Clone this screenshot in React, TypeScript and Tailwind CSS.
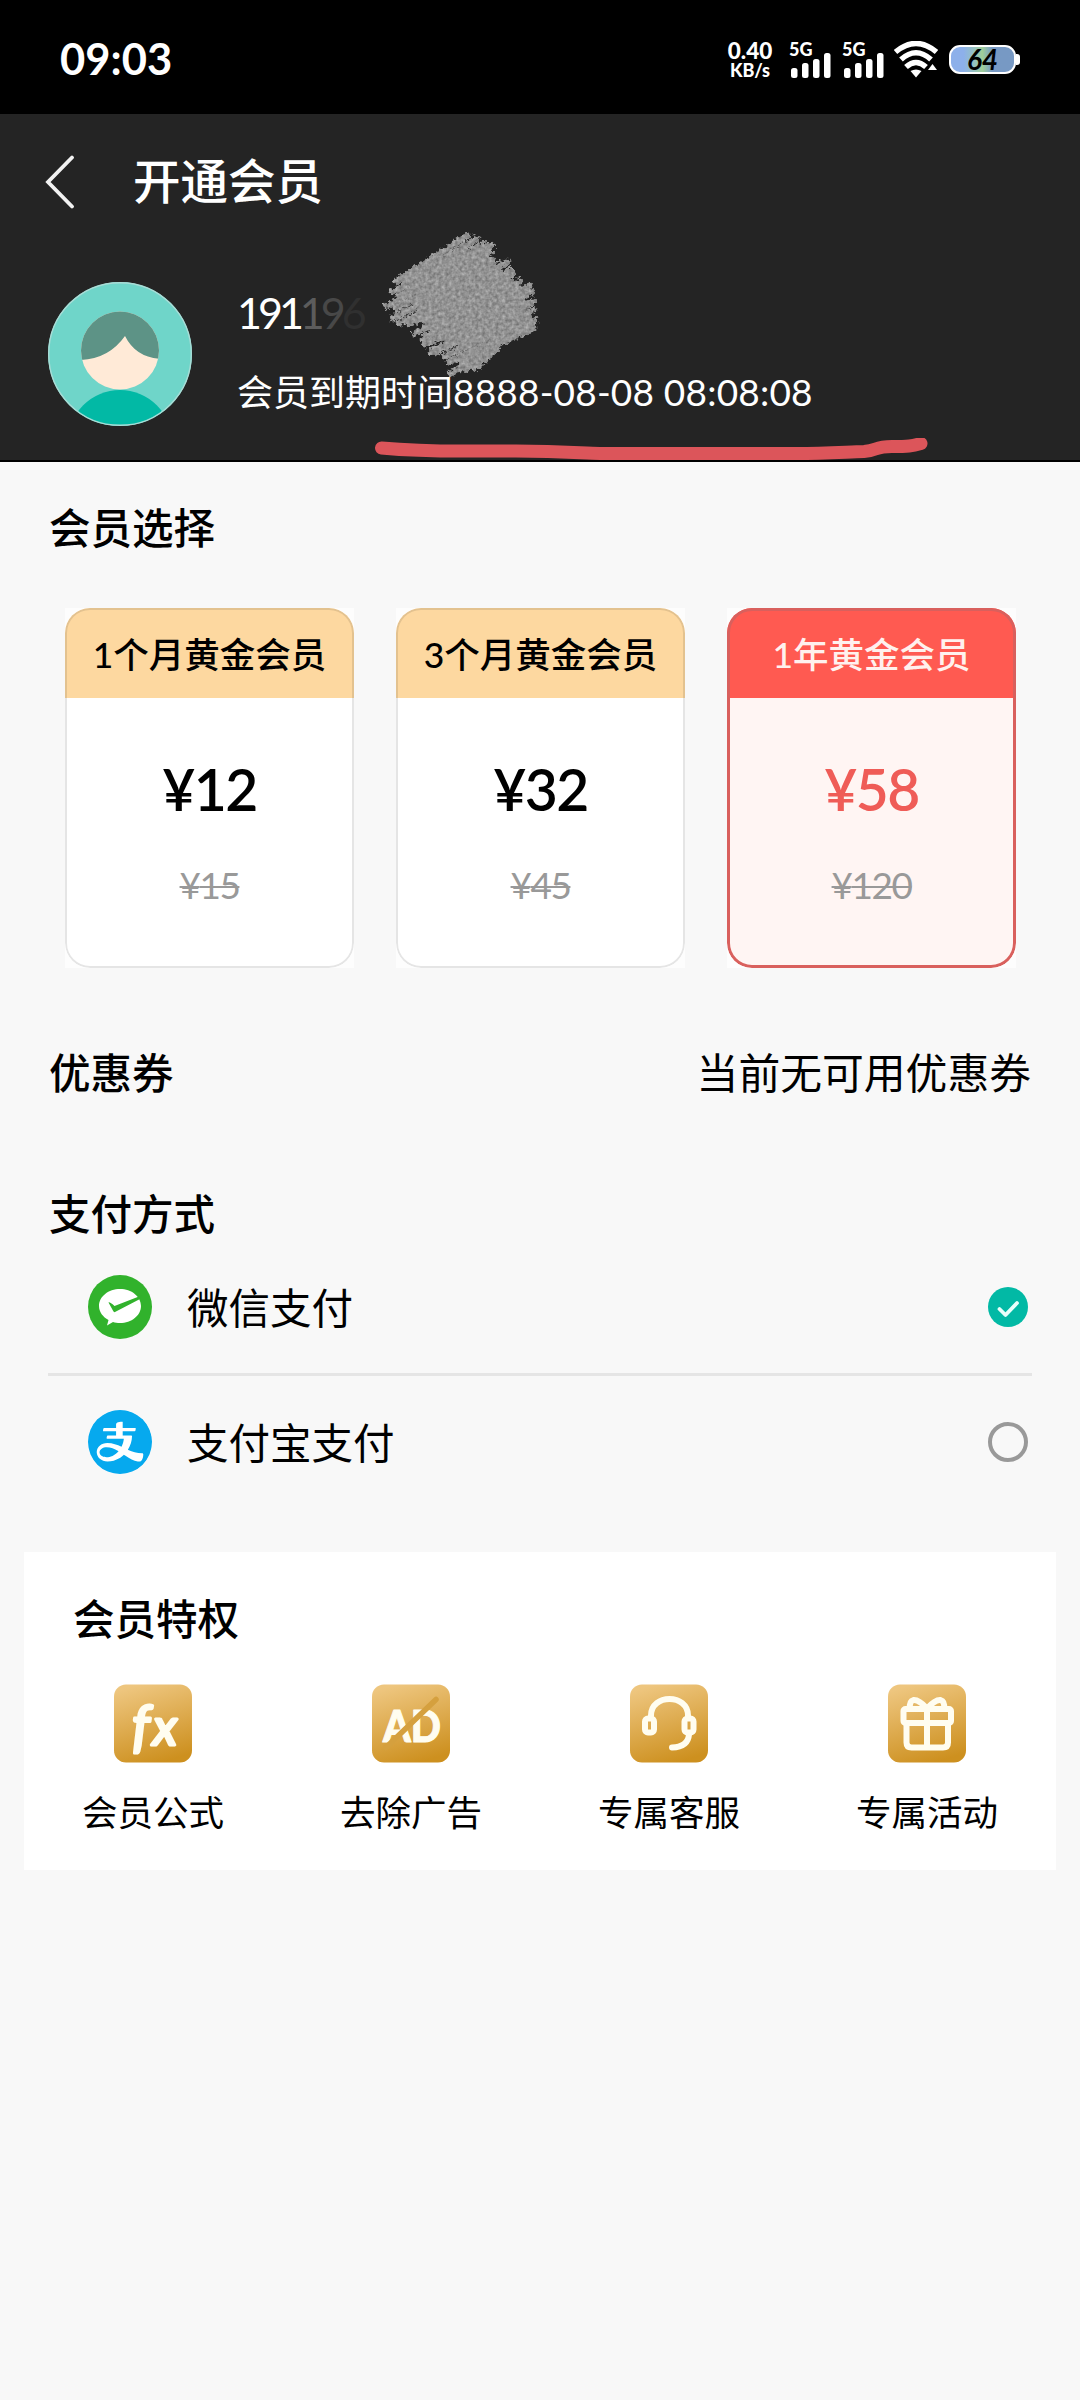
import { useState } from 'react'
import type { ReactNode } from 'react'
import { AiFillAlipayCircle } from 'react-icons/ai'

type Plan = { id: string; name: string; price: number; original: number }

const PLANS: Plan[] = [
  { id: 'month', name: '1个月黄金会员', price: 12, original: 15 },
  { id: 'quarter', name: '3个月黄金会员', price: 32, original: 45 },
  { id: 'year', name: '1年黄金会员', price: 58, original: 120 },
]

// [x1, y1, x2, y2] of each pencil stroke
const STROKES = [
  [18, 55, 88, 10], [26, 56, 97, 13], [14, 66, 104, 18], [20, 70, 113, 19],
  [8, 80, 112, 26], [18, 82, 114, 34], [14, 92, 128, 36], [20, 97, 132, 44],
  [30, 98, 134, 48], [36, 107, 140, 56], [44, 112, 150, 60], [46, 118, 152, 66],
  [52, 126, 154, 76], [56, 126, 154, 84], [66, 130, 150, 92], [70, 136, 156, 95],
  [82, 134, 154, 102], [72, 147, 130, 111], [86, 144, 120, 117], [96, 142, 118, 122],
]

function Scribble() {
  return (
    <svg viewBox="0 0 170 160" className="absolute left-[379px] top-[112px] w-[170px] h-[160px]">
      <filter id="pencil" x="-10%" y="-10%" width="120%" height="120%" colorInterpolationFilters="sRGB">
        <feTurbulence type="fractalNoise" baseFrequency="0.3" numOctaves="2" seed="4" result="n" />
        <feDisplacementMap in="SourceGraphic" in2="n" scale="8" xChannelSelector="R" yChannelSelector="G" result="rough" />
        <feColorMatrix in="n" type="matrix" values="0.35 0 0 0 0.4  0.35 0 0 0 0.4  0.35 0 0 0 0.4  0 0 0 0 1" result="grain" />
        <feComposite in="grain" in2="rough" operator="in" />
      </filter>
      <g filter="url(#pencil)" stroke="#8c8c8c" strokeWidth="6.5" strokeLinecap="round">
        <path d="M46 46 84 20 108 30 126 46 142 62 148 80 134 98 92 122 66 118 44 100 34 78Z" fill="#8c8c8c" stroke="none" />
        {STROKES.map(([x1, y1, x2, y2], i) => <path key={i} d={`M${x1} ${y1}L${x2} ${y2}`} />)}
      </g>
    </svg>
  )
}

function Signal() {
  return (
    <div className="w-[42px] h-[36px] flex flex-col">
      <span className="text-[18px] leading-[14px] h-[11px] font-black">5G</span>
      <svg viewBox="0 0 42 25" className="w-[42px] h-[25px] fill-white">
        <rect x="2" y="15" width="6.5" height="10" rx="2.5" />
        <rect x="13" y="10" width="6.5" height="15" rx="2.5" />
        <rect x="24" y="6" width="6.5" height="19" rx="2.5" />
        <rect x="35" y="0" width="6.5" height="25" rx="2.5" />
      </svg>
    </div>
  )
}

function StatusBar() {
  return (
    <div className="h-[114px] bg-black text-white flex items-center justify-between px-[60px] pt-[5px]">
      <span className="text-[43.5px] leading-none font-bold pb-[1px]">09:03</span>
      <div className="flex items-center">
        <div className="flex flex-col items-center w-[50px] mr-[14px] font-black">
          <span className="text-[22.500px] leading-[21px]">0.40</span>
          <span className="text-[18px] leading-[19px]">KB/s</span>
        </div>
        <Signal />
        <div className="w-[11px]" />
        <Signal />
        <svg viewBox="0 0 44 37" className="w-[44px] h-[37px] ml-[10px] mr-[11px]">
          <g fill="none" stroke="#fff" strokeWidth="5.500">
            <path d="M1.500 11Q22-6 42.500 11" />
            <path d="M7 18.500Q22 5 37 18.500" />
            <path d="M12 26Q22 17 32 26" />
          </g>
          <path d="M16.500 30Q22 27 27.500 30L22 36.500Z" fill="#fff" />
          <path d="M34 29 38.500 23 43 29Z" fill="#fff" />
        </svg>
        <div className="flex items-center">
          <div className="w-[67px] h-[29px] rounded-[11px] border-2 border-white bg-linear-to-r from-[#8db0ea] from-20% via-[#9fce98] via-50% to-[#7799c4] to-65% text-black text-[28px] leading-[25px] font-bold italic text-center">
            64
          </div>
          <div className="w-[4px] h-[11px] bg-white rounded-r-[3px]" />
        </div>
      </div>
    </div>
  )
}

function Avatar() {
  return (
    <svg viewBox="0 0 144 144" className="w-[144px] h-[144px] shrink-0">
      <clipPath id="round"><circle cx="72" cy="72" r="72" /></clipPath>
      <clipPath id="head"><circle cx="72" cy="68.500" r="39" /></clipPath>
      <g clipPath="url(#round)">
        <rect width="144" height="144" fill="#6fd5c9" />
        <circle cx="72" cy="160" r="52" fill="#02b9a5" />
        <circle cx="72" cy="68.500" r="39" fill="#ffead7" />
        <path d="M30 26H114V77Q88 76 77 54Q60 78 30 78Z" fill="#5d9386" clipPath="url(#head)" />
      </g>
      <circle cx="72" cy="72" r="71.300" fill="none" stroke="#a9dcd6" strokeWidth="1.400" />
    </svg>
  )
}

function Header() {
  return (
    <div className="relative h-[348px] bg-[#242424] text-white border-b-2 border-black">
      <div className="h-[135px] flex items-center">
        <svg viewBox="0 0 30 54" className="w-[30px] h-[54px] ml-[45px] mr-[58px]">
          <path d="M27 2.500 3 27 27 51.500" fill="none" stroke="#f2f2f2" strokeWidth="3.800" strokeLinecap="round" />
        </svg>
        <h1 className="text-[47.500px] leading-[60px] font-medium pb-[1px]">开通会员</h1>
      </div>
      <div className="flex pl-[48px] pt-[33px]">
        <Avatar />
        <div className="ml-[45px]">
          <p className="text-[43px] leading-[62px] h-[60px] tracking-[-4px]">
            191<span className="text-[#5c5c5c]">1</span><span className="text-[#484848]">9</span><span className="text-[#303030]">6</span>
          </p>
          <p className="text-[36px] leading-[60px] mt-[20px] whitespace-nowrap">
            会员到期时间<span className="text-[37px] tracking-[0.200px]">8888-08-08 08:08:08</span>
          </p>
        </div>
      </div>
      <Scribble />
      {/* red marker under the expiry date */}
      <svg viewBox="0 0 570 30" className="absolute left-[366px] top-[324px] w-[570px] h-[30px]">
        <path d="M15.500 10C70 15 100 12.500 150 13S220 15.500 234 15.500H430C460 15.500 480 14 498 13.500 512 12.500 508 8.500 526 8.500 542 8.500 546 8 555 5.500"
          fill="none" stroke="#dc555a" strokeWidth="13" strokeLinecap="round" strokeLinejoin="round" />
      </svg>
    </div>
  )
}

function PlanCard({ plan, active, onClick }: { plan: Plan; active: boolean; onClick: () => void }) {
  return (
    <div className="w-[289px] h-[360px] bg-[#fdfdfd]" onClick={onClick}>
      <div className={`relative w-full h-full rounded-[25px] overflow-hidden text-center ${active ? 'bg-[#fff5f3]' : 'bg-white'}`}>
        <div className={`h-[90px] leading-[94px] text-[35.500px] font-medium whitespace-nowrap ${active ? 'bg-[#ff5a51] text-[#fff1ee]' : 'bg-[#fdd8a0] text-black'}`}>
          {plan.name}
        </div>
        <p className={`mt-[61px] text-[57px] leading-[60px] font-semibold tracking-[-1.500px] ${active ? 'text-[#ef5c57]' : 'text-black'}`}>¥{plan.price}</p>
        <p className="mt-[42px] text-[37px] leading-[48px] text-[#999] tracking-[-1.500px]">
          <span className="line-through decoration-[2px]">¥{plan.original}</span>
        </p>
        <div className={`absolute inset-0 rounded-[25px] ${active ? 'border-[3px] border-[#d9605d]' : 'border-2 border-black/10'}`} />
      </div>
    </div>
  )
}

function WechatPay() {
  return (
    <svg viewBox="0 0 64 64" className="w-[64px] h-[64px]">
      <circle cx="32" cy="32" r="32" fill="#31b22c" />
      <path d="M32 14C43.500 14 53 21.500 53 31S43.500 48 32 48C29.500 48 27 47.600 25 47L19 50.500 20.500 45C15 42 11 37 11 31 11 21.500 20.500 14 32 14Z" fill="#fff" />
      <path d="M20.500 27.500Q21.500 26.500 26.500 31L53.500 20.500 52 24 27 37Q25.800 37.500 25.200 36Z" fill="#31b22c" />
    </svg>
  )
}

function Alipay() {
  return (
    <div className="w-[64px] h-[64px] rounded-full bg-white overflow-hidden flex items-center justify-center">
      <AiFillAlipayCircle className="w-[74px] h-[74px] shrink-0 text-[#06a9ee]" />
    </div>
  )
}

function Radio({ checked }: { checked: boolean }) {
  if (!checked) return <div className="w-[40px] h-[40px] rounded-full border-4 border-[#999]" />
  return (
    <svg viewBox="0 0 40 40" className="w-[40px] h-[40px]">
      <circle cx="20" cy="20" r="20" fill="#02b9a5" />
      <path d="M11.500 22 17.500 28 29 16" fill="none" stroke="#e8fffb" strokeWidth="3.800" strokeLinecap="round" strokeLinejoin="round" />
    </svg>
  )
}

function Perk({ label, children }: { label: string; children: ReactNode }) {
  return (
    <div className="flex flex-col items-center">
      <svg viewBox="0 0 78 78" className="w-[78px] h-[79px]">
        <defs>
          <linearGradient id="gold" x1="0.300" y1="0" x2="0.600" y2="1">
            <stop offset="0" stopColor="#eec67f" />
            <stop offset="1" stopColor="#cd901f" />
          </linearGradient>
        </defs>
        <rect width="78" height="78" rx="12" fill="url(#gold)" />
        {children}
      </svg>
      <span className="mt-[26px] text-[35.500px] leading-[48px]">{label}</span>
    </div>
  )
}

export default function App() {
  const [plan, setPlan] = useState('year')
  const [pay, setPay] = useState('wechat')

  return (
    <div className="w-[1080px] h-[2400px] overflow-hidden bg-[#f8f8f8] text-black font-[Lato,'Noto_Sans_CJK_SC',sans-serif]">
      <StatusBar />
      <Header />

      <div className="px-[48px]">
        <h2 className="pt-[36px] pl-[1px] text-[41.500px] leading-[60px] font-medium">会员选择</h2>
        <div className="mt-[50px] flex gap-[42px] pl-[17px]">
          {PLANS.map(p => <PlanCard key={p.id} plan={p} active={plan === p.id} onClick={() => setPlan(p.id)} />)}
        </div>

        <div className="mt-[75px] flex justify-between pl-[1px] leading-[60px]">
          <span className="text-[41.500px] font-medium">优惠券</span>
          <span className="text-[41.800px] pr-[1px]">当前无可用优惠券</span>
        </div>

        <h2 className="mt-[81px] pl-[1px] text-[41.500px] leading-[60px] font-medium">支付方式</h2>
        <div className="h-[129px] pb-[3px] pl-[40px] pr-[4px] flex items-center" onClick={() => setPay('wechat')}>
          <WechatPay />
          <span className="ml-[35px] flex-1 pt-[2px] text-[41.500px]">微信支付</span>
          <Radio checked={pay === 'wechat'} />
        </div>
        <div className="h-[3px] bg-[#e5e5e5]" />
        <div className="h-[132px] pl-[40px] pr-[4px] flex items-center" onClick={() => setPay('alipay')}>
          <Alipay />
          <span className="ml-[35px] flex-1 pt-[2px] text-[41.500px]">支付宝支付</span>
          <Radio checked={pay === 'alipay'} />
        </div>
      </div>

      <div className="mx-[24px] mt-[44px] h-[318px] bg-white pt-[37px]">
        <h2 className="pl-[49px] text-[41.500px] leading-[60px] font-medium">会员特权</h2>
        <div className="mt-[35px] grid grid-cols-4">
          <Perk label="会员公式">
            <g fill="#fffdf0" stroke="#fffdf0" strokeWidth="2" strokeLinejoin="round" fontStyle="italic">
              <text x="18" y="60" fontSize="56" fontWeight="400" strokeWidth="3">f</text>
              <text x="39" y="60" fontSize="50" fontWeight="400" strokeWidth="3" textLength="24" lengthAdjust="spacingAndGlyphs">x</text>
            </g>
          </Perk>
          <Perk label="去除广告">
            <text x="11" y="57" fontSize="44" fontWeight="900" fill="#fffdf0" stroke="#fffdf0" strokeLinejoin="round" textLength="58" lengthAdjust="spacingAndGlyphs">AD</text>
            <path d="M14 63 64 15" stroke="#d5a03e" strokeWidth="5.500" strokeLinecap="round" />
          </Perk>
          <Perk label="专属客服">
            <g fill="none" stroke="#fffdf0" strokeWidth="6" strokeLinecap="round">
              <path d="M21 31C21 9 58 9 58 31" />
              <rect x="15" y="34" width="9" height="14" rx="3" />
              <rect x="54.500" y="34" width="9" height="14" rx="3" />
              <path d="M59 50Q58 62.500 42 63" />
            </g>
          </Perk>
          <Perk label="专属活动">
            <g fill="none" stroke="#fffdf0" strokeWidth="6" strokeLinejoin="round">
              <rect x="15.500" y="24.500" width="47.500" height="14" rx="2" />
              <path d="M18.500 38V58Q18.500 63 23.500 63H55Q60 63 60 58V38M39 24V63" />
              <path d="M39 24Q31 15 25.500 15.500 21 17 22 24M39 24Q47 15 52.500 15.500 57 17 56 24" />
            </g>
          </Perk>
        </div>
      </div>
    </div>
  )
}
